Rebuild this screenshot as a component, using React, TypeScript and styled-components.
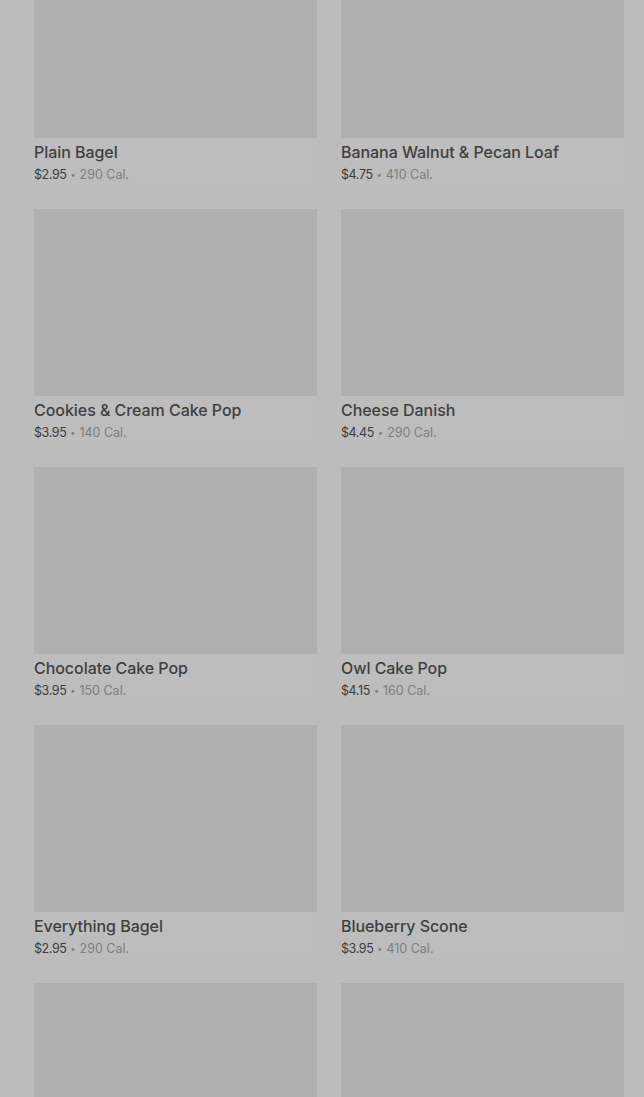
import styled, { createGlobalStyle } from "styled-components";

const GlobalStyle = createGlobalStyle`
  html, body {
    margin: 0;
    padding: 0;
    background: #bcbcbc;
    font-family: Inter, "Noto Sans", Arial, sans-serif;
    overflow: hidden;
  }
`;

const items = [
  { name: "Plain Bagel", price: "$2.95", cal: 290 },
  { name: "Banana Walnut & Pecan Loaf", price: "$4.75", cal: 410 },
  { name: "Cookies & Cream Cake Pop", price: "$3.95", cal: 140 },
  { name: "Cheese Danish", price: "$4.45", cal: 290 },
  { name: "Chocolate Cake Pop", price: "$3.95", cal: 150 },
  { name: "Owl Cake Pop", price: "$4.15", cal: 160 },
  { name: "Everything Bagel", price: "$2.95", cal: 290 },
  { name: "Blueberry Scone", price: "$3.95", cal: 410 },
  { name: "", price: "", cal: 0 },
  { name: "", price: "", cal: 0 },
];

export default function App() {
  return (
    <>
      <GlobalStyle />
      <Page>
        <Grid>
          {items.map((item, index) => (
            <Card key={index}>
              <Thumb />
              {item.name && (
                <Info>
                  <Name>{item.name}</Name>
                  <Meta>
                    <Price>{item.price}</Price>
                    <Dot>•</Dot>
                    <Cal>{item.cal} Cal.</Cal>
                  </Meta>
                </Info>
              )}
            </Card>
          ))}
        </Grid>
      </Page>
    </>
  );
}

const Page = styled.div`
  width: 644px;
  height: 1097px;
  overflow: hidden;
  background: #bcbcbc;
  padding: 0 20px 0 34px;
  box-sizing: border-box;
`;

const Grid = styled.div`
  display: grid;
  grid-template-columns: 283px 283px;
  column-gap: 24px;
  row-gap: 25px;
  margin-top: -49px;
`;

const Card = styled.div`
  display: flex;
  flex-direction: column;
  background: #bdbdbd;
`;

const Thumb = styled.div`
  height: 187px;
  background: #b0b0b0;
`;

const Info = styled.div`
  padding-top: 3px;
  display: flex;
  flex-direction: column;
  gap: 3px;
`;

const Name = styled.p`
  margin: 0;
  font-size: 16px;
  line-height: 22px;
  font-weight: 500;
  color: #404040;
  letter-spacing: -0.05px;
`;

const Meta = styled.p`
  margin: 0;
  font-size: 12.5px;
  line-height: 18px;
  color: #7e7e7e;
  display: flex;
  align-items: center;
  gap: 4px;
`;

const Price = styled.span`
  color: #3c3c3c;
  letter-spacing: -0.4px;
`;

const Dot = styled.span`
  font-size: 9px;
  color: #7e7e7e;
`;

const Cal = styled.span`
  color: #7e7e7e;
`;
